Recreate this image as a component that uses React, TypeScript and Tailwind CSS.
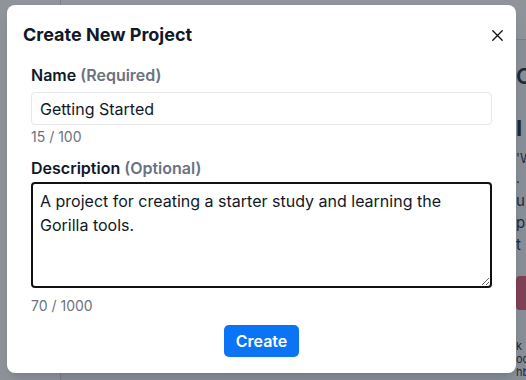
import React, { useState } from "react";

function CloseIcon() {
  return (
    <svg width="11" height="11" viewBox="0 0 11 11" fill="none">
      <path d="M0.8 0.8L10.2 10.2M10.2 0.8L0.8 10.2" stroke="#111" strokeWidth="1.3" strokeLinecap="round" />
    </svg>
  );
}

// faint page that sits behind the dialog overlay
function BackgroundPage() {
  return (
    <div className="flex h-[380px] w-[526px] bg-[#f3f4f6]">
      <div className="w-[61px] shrink-0 border-r border-[#d1d5db] bg-white" />
      <div className="flex flex-1 flex-col">
        <div className="h-[40px] border-b border-[#d1d5db] bg-white" />
        <div className="flex flex-1">
          <div className="w-[454px] shrink-0" />
          <div className="flex flex-1 flex-col overflow-hidden pl-[1px] text-[#1f2937]">
            <div className="mt-[22px] text-[22px] font-semibold leading-[28px]">C</div>
            <div className="mt-[24px] text-[22px] font-bold leading-[28px]">I</div>
            <div className="mt-[6px] text-[13px] leading-[20px]">'W</div>
            <div className="text-[13px] leading-[20px]">.</div>
            <div className="mt-[2px] text-[15px] leading-[22px]">u</div>
            <div className="text-[15px] leading-[22px]">pl</div>
            <div className="text-[15px] leading-[22px]">t</div>
            <div className="mt-[20px] h-[34px] w-[40px] rounded-l bg-[#e25675]" />
            <div className="mt-[30px] text-[11px] leading-[13px]">k</div>
            <div className="text-[11px] leading-[13px]">od</div>
            <div className="text-[11px] leading-[13px]">hb</div>
          </div>
        </div>
      </div>
    </div>
  );
}

export default function App() {
  const [name, setName] = useState("Getting Started");
  const [description, setDescription] = useState(
    "A project for creating a starter study and learning the Gorilla tools."
  );

  return (
    <div
      className="relative h-[380px] w-[526px] overflow-hidden"
      style={{ fontFamily: "Inter, 'Noto Sans', sans-serif" }}
    >
      <BackgroundPage />
      <div className="absolute inset-0 bg-[#1f2937]/50">
        <div className="ml-[7px] mt-[5px] flex h-[368px] w-[509px] flex-col rounded-lg bg-white shadow-lg">
          <div className="flex items-center justify-between pl-4 pr-[7px] pt-4">
            <h2 className="text-[18px] font-bold leading-[28px] text-[#111827]">Create New Project</h2>
            <button className="flex h-6 w-6 items-center justify-center">
              <CloseIcon />
            </button>
          </div>

          <div className="flex flex-1 flex-col px-6 pt-4">
            <label className="text-[16px] font-semibold leading-[20px] text-[#111827]">
              Name <span className="text-[#6b7280]">(Required)</span>
            </label>
            <input
              type="text"
              value={name}
              onChange={(e) => setName(e.target.value)}
              className="mt-[7px] h-[33px] w-full rounded border border-[#e5e7eb] px-2 text-[16px] text-[#111827] outline-none"
            />
            <div className="mt-[2px] text-[14px] leading-[20px] text-[#6b7280]">
              {name.length} / 100
            </div>

            <label className="mt-[11px] text-[16px] font-semibold leading-[20px] text-[#111827]">
              Description <span className="text-[#6b7280]">(Optional)</span>
            </label>
            <textarea
              value={description}
              onChange={(e) => setDescription(e.target.value)}
              className="mt-[4px] block h-[106px] w-full resize-y rounded border-2 border-[#111] px-[7px] pt-[5px] text-[16px] leading-6 text-[#111827] outline-none"
            />
            <div className="mt-[8px] text-[14px] leading-[20px] text-[#6b7280]">
              {description.length} / 1000
            </div>

            <div className="mt-[9px] flex justify-center">
              <button className="h-[32px] w-[75px] rounded-[5px] bg-[#0b74f5] text-[16px] font-semibold text-white">
                Create
              </button>
            </div>
          </div>
        </div>
      </div>
    </div>
  );
}
